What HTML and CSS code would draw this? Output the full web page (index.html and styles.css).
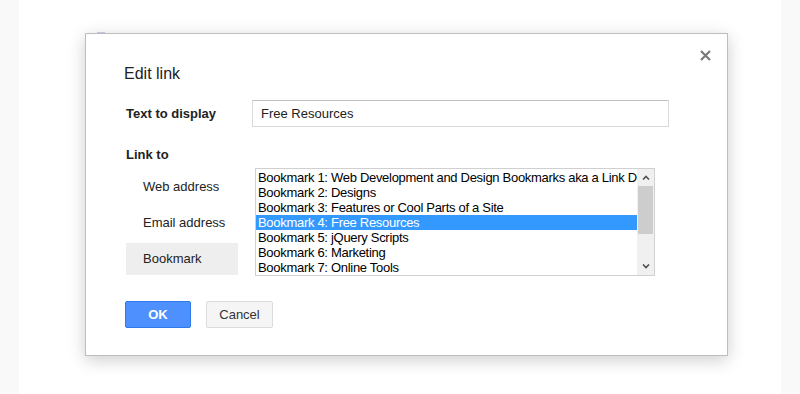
FILE: index.html
```html
<!DOCTYPE html>
<html lang="en">
<head>
    <meta charset="UTF-8">
    <title>Edit link</title>
    <link rel="stylesheet" href="styles.css">
</head>
<body>
    <div class="side"></div>
    <div class="page">
        <div class="page-mark"></div>
    </div>
    <div class="side"></div>

    <div class="dialog">
        <button class="close" type="button" aria-label="Close">
            <svg width="11" height="11" viewBox="0 0 11 11">
                <path d="M1 1 L10 10 M10 1 L1 10" stroke="#7a7a7a" stroke-width="2.2" fill="none"/>
            </svg>
        </button>
        <h2>Edit link</h2>

        <div class="row">
            <label class="label" for="display">Text to display</label>
            <input class="text-input" id="display" type="text" value="Free Resources">
        </div>

        <div class="label link-to">Link to</div>

        <div class="link-body">
            <div class="tabs">
                <div class="tab">Web address</div>
                <div class="tab">Email address</div>
                <div class="tab active">Bookmark</div>
            </div>

            <div class="listbox">
                <div class="items">
                    <div class="item">Bookmark 1: Web Development and Design Bookmarks aka a Link Directory</div>
                    <div class="item">Bookmark 2: Designs</div>
                    <div class="item">Bookmark 3: Features or Cool Parts of a Site</div>
                    <div class="item selected">Bookmark 4: Free Resources</div>
                    <div class="item">Bookmark 5: jQuery Scripts</div>
                    <div class="item">Bookmark 6: Marketing</div>
                    <div class="item">Bookmark 7: Online Tools</div>
                </div>
                <div class="scrollbar">
                    <div class="arrow">
                        <svg width="8" height="5" viewBox="0 0 8 5"><path d="M1 4.5 L4 1.5 L7 4.5" stroke="#505050" stroke-width="1.6" fill="none"/></svg>
                    </div>
                    <div class="track"><div class="thumb"></div></div>
                    <div class="arrow">
                        <svg width="8" height="5" viewBox="0 0 8 5"><path d="M1 0.5 L4 3.5 L7 0.5" stroke="#505050" stroke-width="1.6" fill="none"/></svg>
                    </div>
                </div>
            </div>
        </div>

        <div class="buttons">
            <button class="btn btn-ok" type="button">OK</button>
            <button class="btn btn-cancel" type="button">Cancel</button>
        </div>
    </div>
</body>
</html>
```

FILE: styles.css
```css
body {
    margin: 0;
    height: 394px;
    display: flex;
    font-family: Arial, "Liberation Sans", sans-serif;
    color: #222;
    background: #fff;
    overflow: hidden;
}

.side {
    width: 19px;
    background: #f9f9f9;
}

.side:last-child {
    width: 22px;
}

.page {
    flex: 1;
    background: #fff;
    padding: 32px 0 0 78px;
}

.page-mark {
    width: 8px;
    height: 2px;
    background: #c9d0ef;
}

/* modal sits over the page */
.dialog {
    position: absolute;
    left: 85px;
    top: 33px;
    width: 643px;
    height: 323px;
    background: #fff;
    border: 1px solid #bdbdbd;
    box-shadow: 0 4px 16px rgba(0,0,0,0.2);
    padding: 0 0 0 40px;
    box-sizing: border-box;
}

.close {
    position: absolute;
    top: 16px;
    right: 16px;
    border: none;
    background: none;
    padding: 0;
    line-height: 0;
    cursor: pointer;
}

h2 {
    margin: 30px 0 0 -2px;
    font-size: 16px;
    font-weight: normal;
    line-height: 20px;
    color: #222;
}

.row {
    display: flex;
    align-items: center;
    margin-top: 16px;
}

.label {
    font-size: 13px;
    font-weight: bold;
    color: #222;
}

.row .label {
    width: 126px;
}

.text-input {
    width: 417px;
    height: 27px;
    box-sizing: border-box;
    border: 1px solid #d9d9d9;
    border-top-color: #c0c0c0;
    padding: 0 8px;
    font-family: Arial, "Liberation Sans", sans-serif;
    font-size: 13px;
    color: #222;
    outline: none;
}

.link-to {
    margin-top: 20px;
    line-height: 15px;
}

.link-body {
    display: flex;
    margin-top: 6px;
}

.tabs {
    width: 112px;
    margin-top: 3px;
}

.tab {
    height: 32px;
    line-height: 32px;
    padding-left: 17px;
    margin-bottom: 4px;
    font-size: 13px;
    color: #222;
}

.tab.active {
    background: #eee;
}

.listbox {
    display: flex;
    width: 400px;
    height: 108px;
    box-sizing: border-box;
    margin: 0 0 0 17px;
    border: 1px solid #d0d0d0;
    background: #fff;
}

.items {
    flex: 1;
    overflow: hidden;
    padding-top: 1px;
}

.item {
    height: 15px;
    line-height: 15px;
    padding-left: 2px;
    font-size: 13px;
    letter-spacing: -0.3px;
    white-space: nowrap;
    color: #000;
}

.item.selected {
    background: #3399ff;
    color: #fff;
}

.scrollbar {
    width: 17px;
    display: flex;
    flex-direction: column;
    background: #f0f0f0;
}

.arrow {
    height: 17px;
    display: flex;
    align-items: center;
    justify-content: center;
}

.track {
    flex: 1;
}

.thumb {
    height: 48px;
    background: #cdcdcd;
    margin: 0 1px;
}

.buttons {
    display: flex;
    gap: 15px;
    margin-top: 22px;
    margin-left: -1px;
}

.btn {
    height: 27px;
    width: 66px;
    padding: 0;
    border-radius: 2px;
    font-family: Arial, "Liberation Sans", sans-serif;
    font-size: 13px;
    cursor: pointer;
}

.btn-ok {
    background: #4d90fe;
    border: 1px solid #3079ed;
    color: #fff;
    font-weight: bold;
}

.btn-cancel {
    background: #f5f5f5;
    border: 1px solid #dcdcdc;
    color: #333;
    width: 67px;
}
```
